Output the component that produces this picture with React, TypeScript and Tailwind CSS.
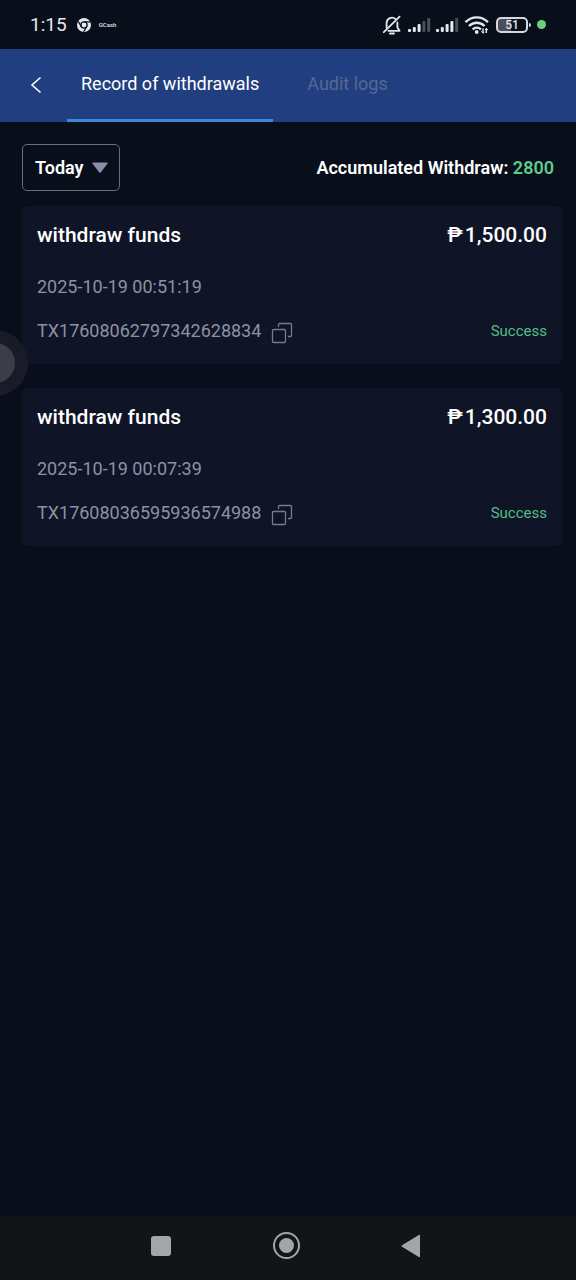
import { useState } from 'react'

const records = [
  { id: 'TX17608062797342628834', title: 'withdraw funds', amount: '1,500.00', date: '2025-10-19 00:51:19', status: 'Success' },
  { id: 'TX17608036595936574988', title: 'withdraw funds', amount: '1,300.00', date: '2025-10-19 00:07:39', status: 'Success' },
]

const tabs = ['Record of withdrawals', 'Audit logs']

function SignalIcon({ level }: { level: number }) {
  return (
    <svg width="24" height="16" viewBox="0 0 24 16" aria-hidden="true">
      {[3, 5, 8, 11, 14].map((h, i) => (
        <rect key={h} x={1 + i * 4.8} y={15 - h} width="3" height={h} rx="1" fill={i < level ? '#e4e7ee' : '#4a4f5a'} />
      ))}
    </svg>
  )
}

function StatusBar() {
  return (
    <div className="flex h-[49px] items-center justify-between pl-[30px] pr-[30px] text-[#e4e7ee]">
      <div className="flex items-center">
        <span className="text-[19px] leading-6">1:15</span>
        <svg className="ml-2.5" width="14" height="14" viewBox="0 0 14 14" aria-hidden="true">
          <circle cx="7" cy="7" r="7" fill="#e4e7ee" />
          <circle cx="7" cy="7" r="3.1" fill="#e4e7ee" stroke="#080e1a" strokeWidth="1.3" />
          <path d="M7 3.9h6.2M4.3 8.6 1.3 3.4M9.7 8.6 6.6 13.8" stroke="#080e1a" strokeWidth="1.2" />
        </svg>
        <span className="ml-2 text-[6px] font-medium leading-3">GCash</span>
      </div>
      <div className="flex items-center">
        <svg width="20" height="20" viewBox="0 0 20 20" fill="none" stroke="currentColor" strokeWidth="1.8" strokeLinecap="round" strokeLinejoin="round" aria-hidden="true">
          <path d="M4.6 12.4V8a5.3 5.3 0 0 1 9-3.8M15.4 7.4v5.2l2.2 3.2H6.4" />
          <path d="M17.6 1.6 1.8 17.2" />
          <path d="M8 18.4h4" strokeWidth="2" />
        </svg>
        <div className="ml-[5px] flex gap-1">
          <SignalIcon level={3} />
          <SignalIcon level={4} />
        </div>
        <svg className="ml-[5px]" width="26" height="20" viewBox="0 0 26 20" fill="none" stroke="currentColor" strokeWidth="2.4" aria-hidden="true">
          <path d="M1.5 7.2C8 .8 17.5.8 24 7.2" />
          <path d="M5 11c4.600-4.400 11-4.400 15.600 0" />
          <path d="M8.600 14.400c2.600-2.200 5.800-2.200 8.400 0" />
          <circle cx="12.700" cy="17" r="1.900" fill="currentColor" stroke="none" />
          <path d="M19 13.500v4.500M22.300 13.500V18" strokeWidth="1.500" />
          <path d="m17.300 16.300 1.700 2 1.300-1M21 15l1.300-1.500L24 15" strokeWidth="1" />
        </svg>
        <div className="ml-1.5 flex items-center gap-px">
          <div className="flex h-4 w-8 items-center justify-center rounded-[5px] border-2 border-[#d5d8df] bg-linear-to-r from-[#4a4f5a] from-45% to-transparent to-45% text-[12px] font-medium leading-3">
            51
          </div>
          <div className="h-1 w-0.5 rounded-r bg-[#d5d8df]" />
        </div>
        <div className="ml-1.5 size-[9px] rounded-full bg-[#6bd07c]" />
      </div>
    </div>
  )
}

function CopyIcon() {
  return (
    <svg width="22" height="22" viewBox="0 0 22 22" fill="none" stroke="currentColor" strokeWidth="1.3" strokeLinejoin="round" aria-hidden="true">
      <rect x="1.500" y="7.500" width="13" height="13" rx="1" />
      <path d="M7.500 5V2.500a1 1 0 0 1 1-1h11a1 1 0 0 1 1 1v11a1 1 0 0 1-1 1h-2.500" />
    </svg>
  )
}

function RecordCard({ record }: { record: (typeof records)[number] }) {
  return (
    <li className="rounded-md bg-[#0f1526] px-[15px] pb-5 pt-4">
      <div className="flex items-center justify-between text-[21px] font-medium leading-[26px] text-white">
        <h2>{record.title}</h2>
        <p className="flex gap-0.5">
          <span>₱</span>
          <span>{record.amount}</span>
        </p>
      </div>
      <p className="mt-[27px] text-lg leading-6 text-[#8d91a5]">{record.date}</p>
      <div className="mt-[19px] flex items-center justify-between">
        <div className="flex items-center gap-2.5 text-[#8d91a5]">
          <span className="text-lg leading-6">{record.id}</span>
          <button
            type="button"
            aria-label="Copy transaction ID"
            className="flex h-[26px] items-end text-[#777b8c]"
            onClick={() => navigator.clipboard?.writeText(record.id)}
          >
            <CopyIcon />
          </button>
        </div>
        <span className="text-[15px] leading-6 text-[#55bd88]">{record.status}</span>
      </div>
    </li>
  )
}

export default function App() {
  const [tab, setTab] = useState(0)
  const [range, setRange] = useState('today')

  return (
    <div className="relative flex min-h-screen flex-col overflow-hidden bg-[#080f1b] font-[Roboto,sans-serif]">
      <StatusBar />

      <header className="flex h-[73px] items-stretch bg-[#213f80]">
        <button type="button" aria-label="Back" className="flex w-[67px] items-center justify-center pb-0.5 pl-1 text-white">
          <svg width="12" height="18" viewBox="0 0 12 18" fill="none" stroke="currentColor" strokeWidth="1.600" aria-hidden="true">
            <path d="M10.500 1.500 2 9l8.500 7.500" />
          </svg>
        </button>
        <nav className="flex gap-5">
          {tabs.map((name, i) => (
            <button
              key={name}
              type="button"
              onClick={() => setTab(i)}
              className={`border-b-[3px] px-3.5 text-lg leading-6 ${
                tab === i ? 'border-[#3c86dc] text-white' : 'border-transparent text-[#56698f]'
              }`}
            >
              {name}
            </button>
          ))}
        </nav>
      </header>

      <main className="flex-1 pl-[22px] pr-[14px] pt-[22px]">
        <div className="flex items-center justify-between pr-2">
          <div className="relative">
            <select
              aria-label="Period"
              value={range}
              onChange={(e) => setRange(e.target.value)}
              className="h-[47px] w-[98px] appearance-none rounded-[5px] border border-[#686d7c] bg-transparent pl-3 pr-8 text-lg font-semibold leading-6 text-white"
            >
              <option value="today">Today</option>
              <option value="yesterday">Yesterday</option>
              <option value="week">Last 7 days</option>
            </select>
            <svg className="pointer-events-none absolute right-3 top-[18px]" width="16" height="12" viewBox="0 0 16 12" aria-hidden="true">
              <path d="M1.200.500h13.600c.800 0 1 .600.600 1.200L8.700 10.600c-.400.500-1 .500-1.400 0L.600 1.700C.200 1.100.400.500 1.200.500Z" fill="#8a8da8" />
            </svg>
          </div>
          <p className="text-lg font-semibold leading-6 text-white">
            Accumulated Withdraw: <span className="text-[#5fcb8a]">2800</span>
          </p>
        </div>

        <ul className="mt-[15px] flex flex-col gap-6">
          {records.map((record) => (
            <RecordCard key={record.id} record={record} />
          ))}
        </ul>
      </main>

      {/* Floating assistive handle, half off the edge */}
      <div className="absolute -left-[38px] top-[330px] flex size-[66px] items-center justify-center rounded-full bg-[#1a1b29]">
        <div className="size-10 rounded-full bg-[#3b3d48]" />
      </div>

      <footer className="flex h-16 items-center justify-center gap-[89px] bg-[#131417] pb-[5px] pr-1 text-[#a3a5a8]">
        <button type="button" aria-label="Recent apps" className="flex size-9 items-center justify-center">
          <span className="size-5 rounded-[3px] bg-current" />
        </button>
        <button type="button" aria-label="Home" className="flex size-9 items-center justify-center">
          <span className="flex size-[27px] items-center justify-center rounded-full border-2 border-current">
            <span className="size-[15px] rounded-full bg-current" />
          </span>
        </button>
        <button type="button" aria-label="Back to previous app" className="flex size-9 items-center justify-center">
          <svg width="20" height="24" viewBox="0 0 20 24" fill="currentColor" aria-hidden="true">
            <path d="M1 11.200 17.800.900c.600-.400 1.200 0 1.200.700v20.800c0 .700-.600 1.100-1.200.700L1 12.800c-.600-.400-.600-1.200 0-1.600Z" />
          </svg>
        </button>
      </footer>
    </div>
  )
}
